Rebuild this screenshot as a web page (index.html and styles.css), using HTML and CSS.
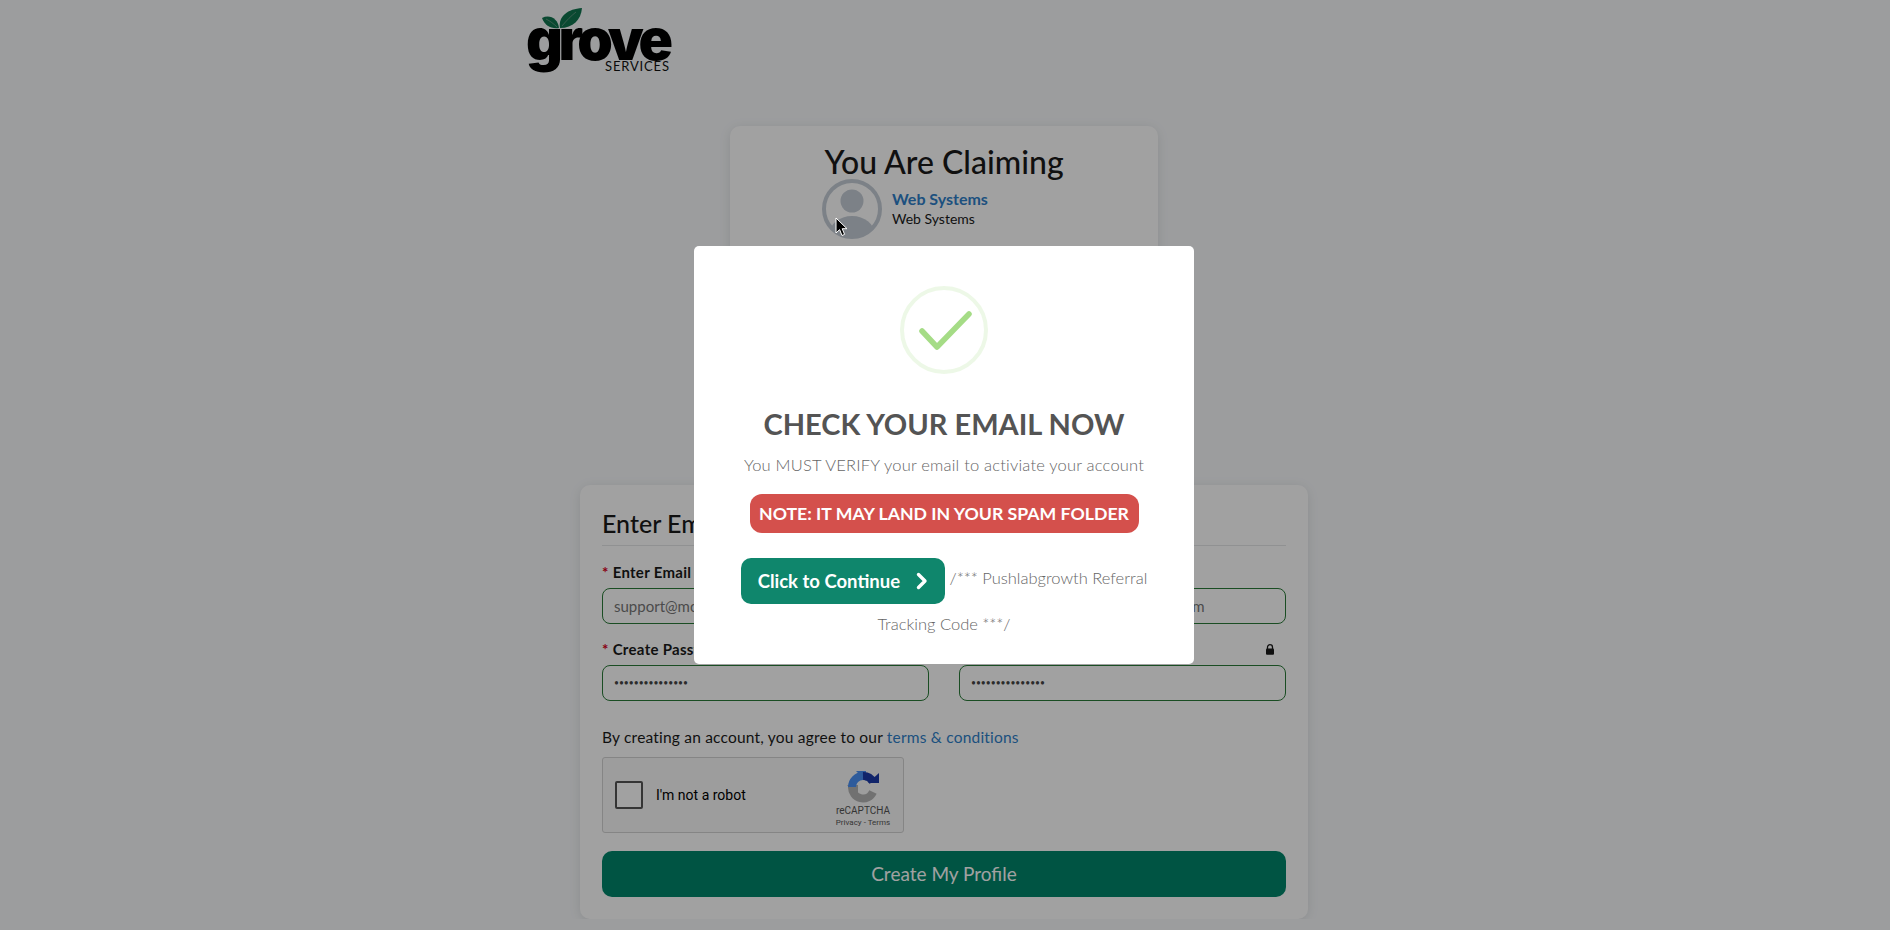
FILE: index.html
```html
<!DOCTYPE html>
<html lang="en">
<head>
    <meta charset="UTF-8">
    <meta name="viewport" content="width=device-width, initial-scale=1.0">
    <title>Grove Services - Claim Profile</title>
    <link rel="stylesheet" href="styles.css">
</head>
<body>
    <header class="topbar">
        <svg class="logo" width="150" height="76" viewBox="0 0 150 76">
            <text class="logo-word" x="0" y="60" textLength="147" lengthAdjust="spacing">grove</text>
            <path class="logo-leaf" d="M34 28C32 16 42 9 56 8C55 20 47 28 34 28Z"/>
            <path class="logo-leaf" d="M16 18C24 14 32 19 33 28C25 29 19 26 16 18Z"/>
            <path class="logo-vein" d="M36 26C41 20 45 16 50 12M20 19C24 21 28 24 31 27"/>
            <text class="logo-sub" x="79" y="71" textLength="64">SERVICES</text>
        </svg>
    </header>

    <main class="content">
        <section class="card claim-card">
            <h1 class="claim-title">You Are Claiming</h1>
            <div class="claim-profile">
                <svg class="avatar" width="60" height="60" viewBox="0 0 60 60">
                    <defs>
                        <clipPath id="avatar-clip"><circle cx="30" cy="30" r="27"/></clipPath>
                    </defs>
                    <circle cx="30" cy="30" r="28" fill="none" stroke="#c5cdd6" stroke-width="4"/>
                    <circle cx="30" cy="22" r="11.5" fill="#c5cdd6"/>
                    <ellipse cx="30" cy="56" rx="23" ry="19" fill="#c5cdd6" clip-path="url(#avatar-clip)"/>
                </svg>
                <div>
                    <a class="claim-name" href="#">Web Systems</a>
                    <div class="claim-sub">Web Systems</div>
                </div>
            </div>
        </section>

        <section class="card signup-card">
            <h2 class="signup-title">Enter Email &amp; Password</h2>
            <div class="form-grid">
                <div>
                    <label class="field-label"><span class="req">*</span> Enter Email</label>
                    <input class="field" type="text" value="support@mobilemarketingpros.com">
                </div>
                <div>
                    <label class="field-label"><span class="req">*</span> Confirm Email</label>
                    <input class="field" type="text" value="support@mobilemarketingpros.com">
                </div>
                <div>
                    <label class="field-label"><span class="req">*</span> Create Password</label>
                    <input class="field field-pass" type="password" value="123456789012345">
                </div>
                <div>
                    <label class="field-label label-split">
                        <span><span class="req">*</span> Confirm Password</span>
                        <svg width="10" height="11" viewBox="0 0 10 11">
                            <path d="M2.5 5V3.2a2.5 2.5 0 0 1 5 0V5" fill="none" stroke="#1a1a1a" stroke-width="1.3"/>
                            <rect x="1" y="4.6" width="8" height="6.2" rx="1" fill="#1a1a1a"/>
                        </svg>
                    </label>
                    <input class="field field-pass" type="password" value="123456789012345">
                </div>
            </div>
            <p class="terms">By creating an account, you agree to our <a href="#">terms &amp; conditions</a></p>
            <div class="recaptcha">
                <span class="recaptcha-box"></span>
                <span class="recaptcha-label">I'm not a robot</span>
                <div class="recaptcha-brand">
                    <svg width="32" height="32" viewBox="0 0 32 32">
                        <path d="M5 16A11 11 0 0 0 26 21" fill="none" stroke="#b4b4b4" stroke-width="8"/>
                        <path d="M0 14H11V25Z" fill="#b4b4b4"/>
                        <path d="M5 16A11 11 0 0 1 16 5" fill="none" stroke="#4a90f5" stroke-width="8"/>
                        <path d="M9 0L19 0V10Z" fill="#4a90f5"/>
                        <path d="M16 5A11 11 0 0 1 26 11" fill="none" stroke="#1c3aa9" stroke-width="8"/>
                        <path d="M21 12L32 2V12Z" fill="#1c3aa9"/>
                    </svg>
                    <div class="recaptcha-name">reCAPTCHA</div>
                    <div class="recaptcha-links">Privacy - Terms</div>
                </div>
            </div>
            <button class="submit-btn" type="button">Create My Profile</button>
        </section>
    </main>

    <svg class="cursor" width="14" height="20" viewBox="0 0 14 20">
        <path d="M1 1V16L4.6 12.6L7 18.5L9.6 17.4L7.2 11.7H12Z" fill="#000" stroke="#fff" stroke-width="1"/>
    </svg>

    <div class="overlay">
        <div class="modal">
            <svg class="success-icon" width="88" height="88" viewBox="0 0 88 88">
                <circle cx="44" cy="44" r="42" fill="none" stroke="#a5dc86" stroke-opacity="0.2" stroke-width="4"/>
                <path d="M22 45L37 61L69 28" fill="none" stroke="#a5dc86" stroke-width="5.5" stroke-linecap="round" stroke-linejoin="round"/>
            </svg>
            <h2 class="modal-title">CHECK YOUR EMAIL NOW</h2>
            <p class="modal-text">You MUST VERIFY your email to activiate your account</p>
            <div class="spam-note">NOTE: IT MAY LAND IN YOUR SPAM FOLDER</div>
            <div class="modal-foot">
                <a class="continue-btn" href="#">Click to Continue
                    <svg width="12" height="18" viewBox="0 0 12 18">
                        <path d="M2.5 2.5L9 9L2.5 15.5" fill="none" stroke="#fff" stroke-width="3.4" stroke-linecap="round" stroke-linejoin="round"/>
                    </svg>
                </a>
                /*** Pushlabgrowth Referral Tracking Code ***/
            </div>
        </div>
    </div>
</body>
</html>
```

FILE: styles.css
```css
* {
    box-sizing: border-box;
}

body {
    margin: 0;
    padding-right: 2px;
    font-family: Lato, "Open Sans", sans-serif;
    background: #f7f9fb;
    color: #1a1a1a;
    overflow: hidden;
}

a {
    text-decoration: none;
}

.topbar {
    width: 836px;
    height: 126px;
    margin: 0 auto;
}

.logo {
    display: block;
    overflow: visible;
}

.logo-word {
    font-family: Inter, sans-serif;
    font-size: 57px;
    font-weight: 900;
    fill: #000;
}

.logo-sub {
    font-family: Lato, sans-serif;
    font-size: 13px;
    fill: #111;
}

.logo-leaf {
    fill: #11744f;
}

.logo-vein {
    fill: none;
    stroke: #6f9a88;
    stroke-width: 0.8;
}

.content {
    display: flex;
    flex-direction: column;
    align-items: center;
}

.card {
    background: #fff;
    border-radius: 10px;
    box-shadow: 0 2px 12px rgba(0, 0, 0, 0.1);
}

.claim-card {
    width: 428px;
    height: 330px;
    margin-bottom: 29px;
    padding: 17px 92px 0;
}

.claim-title {
    margin: 0;
    font-size: 32px;
    font-weight: 500;
    line-height: 38px;
    text-align: center;
    color: #1a1a1a;
    white-space: nowrap;
}

.claim-profile {
    display: flex;
    align-items: center;
    gap: 10px;
    margin-top: -2px;
}

.avatar {
    flex: none;
}

.claim-name {
    display: block;
    margin-top: -3px;
    margin-bottom: 2px;
    font-size: 16px;
    font-weight: 700;
    color: #2f7fc9;
}

.claim-sub {
    font-size: 14px;
    color: #1a1a1a;
}

.signup-card {
    width: 728px;
    height: 434px;
    padding: 20px 22px 0;
}

.signup-title {
    margin: 0;
    height: 41px;
    font-size: 25px;
    font-weight: 500;
    line-height: 36px;
    color: #1a1a1a;
    border-bottom: 1px solid #e4e6e8;
}

.form-grid {
    display: grid;
    grid-template-columns: 327px 327px;
    column-gap: 30px;
    row-gap: 15px;
    margin-top: 16px;
}

.field-label {
    display: block;
    height: 20px;
    margin-bottom: 6px;
    font-size: 15px;
    font-weight: 700;
    line-height: 20px;
    letter-spacing: 0.3px;
}

.label-split {
    display: flex;
    justify-content: space-between;
    align-items: center;
    padding-right: 11px;
}

.req {
    color: #d9001b;
}

.field {
    display: block;
    width: 100%;
    height: 36px;
    padding: 0 11px;
    font-family: inherit;
    font-size: 15px;
    color: #777;
    background: #fff;
    border: 1px solid #2a7a38;
    border-radius: 8px;
}

.field-pass {
    font-size: 8.5px;
    color: #444;
}

.terms {
    height: 20px;
    margin: 26px 0 10px;
    font-size: 15.5px;
    line-height: 20px;
    letter-spacing: 0.2px;
}

.terms a {
    color: #2f7fc9;
}

.recaptcha {
    display: flex;
    align-items: center;
    width: 302px;
    height: 76px;
    padding-left: 12px;
    background: #f9f9f9;
    border: 1px solid #d3d3d3;
    border-radius: 3px;
    font-family: Roboto, sans-serif;
}

.recaptcha-box {
    width: 28px;
    height: 28px;
    background: #fff;
    border: 2px solid #555;
    border-radius: 2px;
}

.recaptcha-label {
    margin-left: 13px;
    font-size: 14px;
    color: #000;
}

.recaptcha-brand {
    width: 64px;
    margin-left: auto;
    margin-right: 8px;
    padding-top: 8px;
    text-align: center;
    color: #555;
}

.recaptcha-brand svg {
    display: block;
    margin: 0 auto 2px;
}

.recaptcha-name {
    font-size: 10px;
    line-height: 12px;
}

.recaptcha-links {
    font-size: 8px;
    line-height: 11px;
}

.submit-btn {
    display: block;
    width: 100%;
    height: 46px;
    margin-top: 18px;
    padding-bottom: 3px;
    font-family: inherit;
    font-size: 19px;
    color: #fff;
    background: #00866a;
    border: none;
    border-radius: 10px;
}

.cursor {
    position: absolute;
    left: 835px;
    top: 217px;
    z-index: 20;
}

.overlay {
    position: fixed;
    top: 0;
    left: 0;
    right: 0;
    bottom: 0;
    z-index: 10;
    display: flex;
    justify-content: center;
    align-items: flex-start;
    padding: 246px 2px 0 0;
    background: rgba(0, 0, 0, 0.37);
}

.modal {
    width: 500px;
    height: 418px;
    padding: 40px 40px 0;
    text-align: center;
    background: #fff;
    border-radius: 5px;
}

.success-icon {
    display: block;
    margin: 0 auto;
}

.modal-title {
    margin: 31px 0 0;
    font-size: 29px;
    font-weight: 700;
    line-height: 38px;
    color: #545454;
    white-space: nowrap;
}

.modal-text {
    margin: 11px 0 0;
    font-size: 16.5px;
    font-weight: 300;
    line-height: 22px;
    color: #666;
    letter-spacing: 0.2px;
    white-space: nowrap;
}

.spam-note {
    width: 389px;
    height: 39px;
    margin: 18px auto 0;
    font-size: 17.7px;
    font-weight: 700;
    line-height: 40px;
    color: #fff;
    background: #d4504c;
    border-radius: 12px;
}

.modal-foot {
    margin: 25px -4px 0;
    font-size: 16.5px;
    font-weight: 300;
    line-height: 40px;
    color: #666;
}

.continue-btn {
    display: inline-flex;
    align-items: center;
    gap: 16px;
    height: 46px;
    padding: 0 17px;
    font-size: 18.5px;
    font-weight: 700;
    color: #fff;
    background: #0f866c;
    border-radius: 10px;
    vertical-align: top;
}
```
